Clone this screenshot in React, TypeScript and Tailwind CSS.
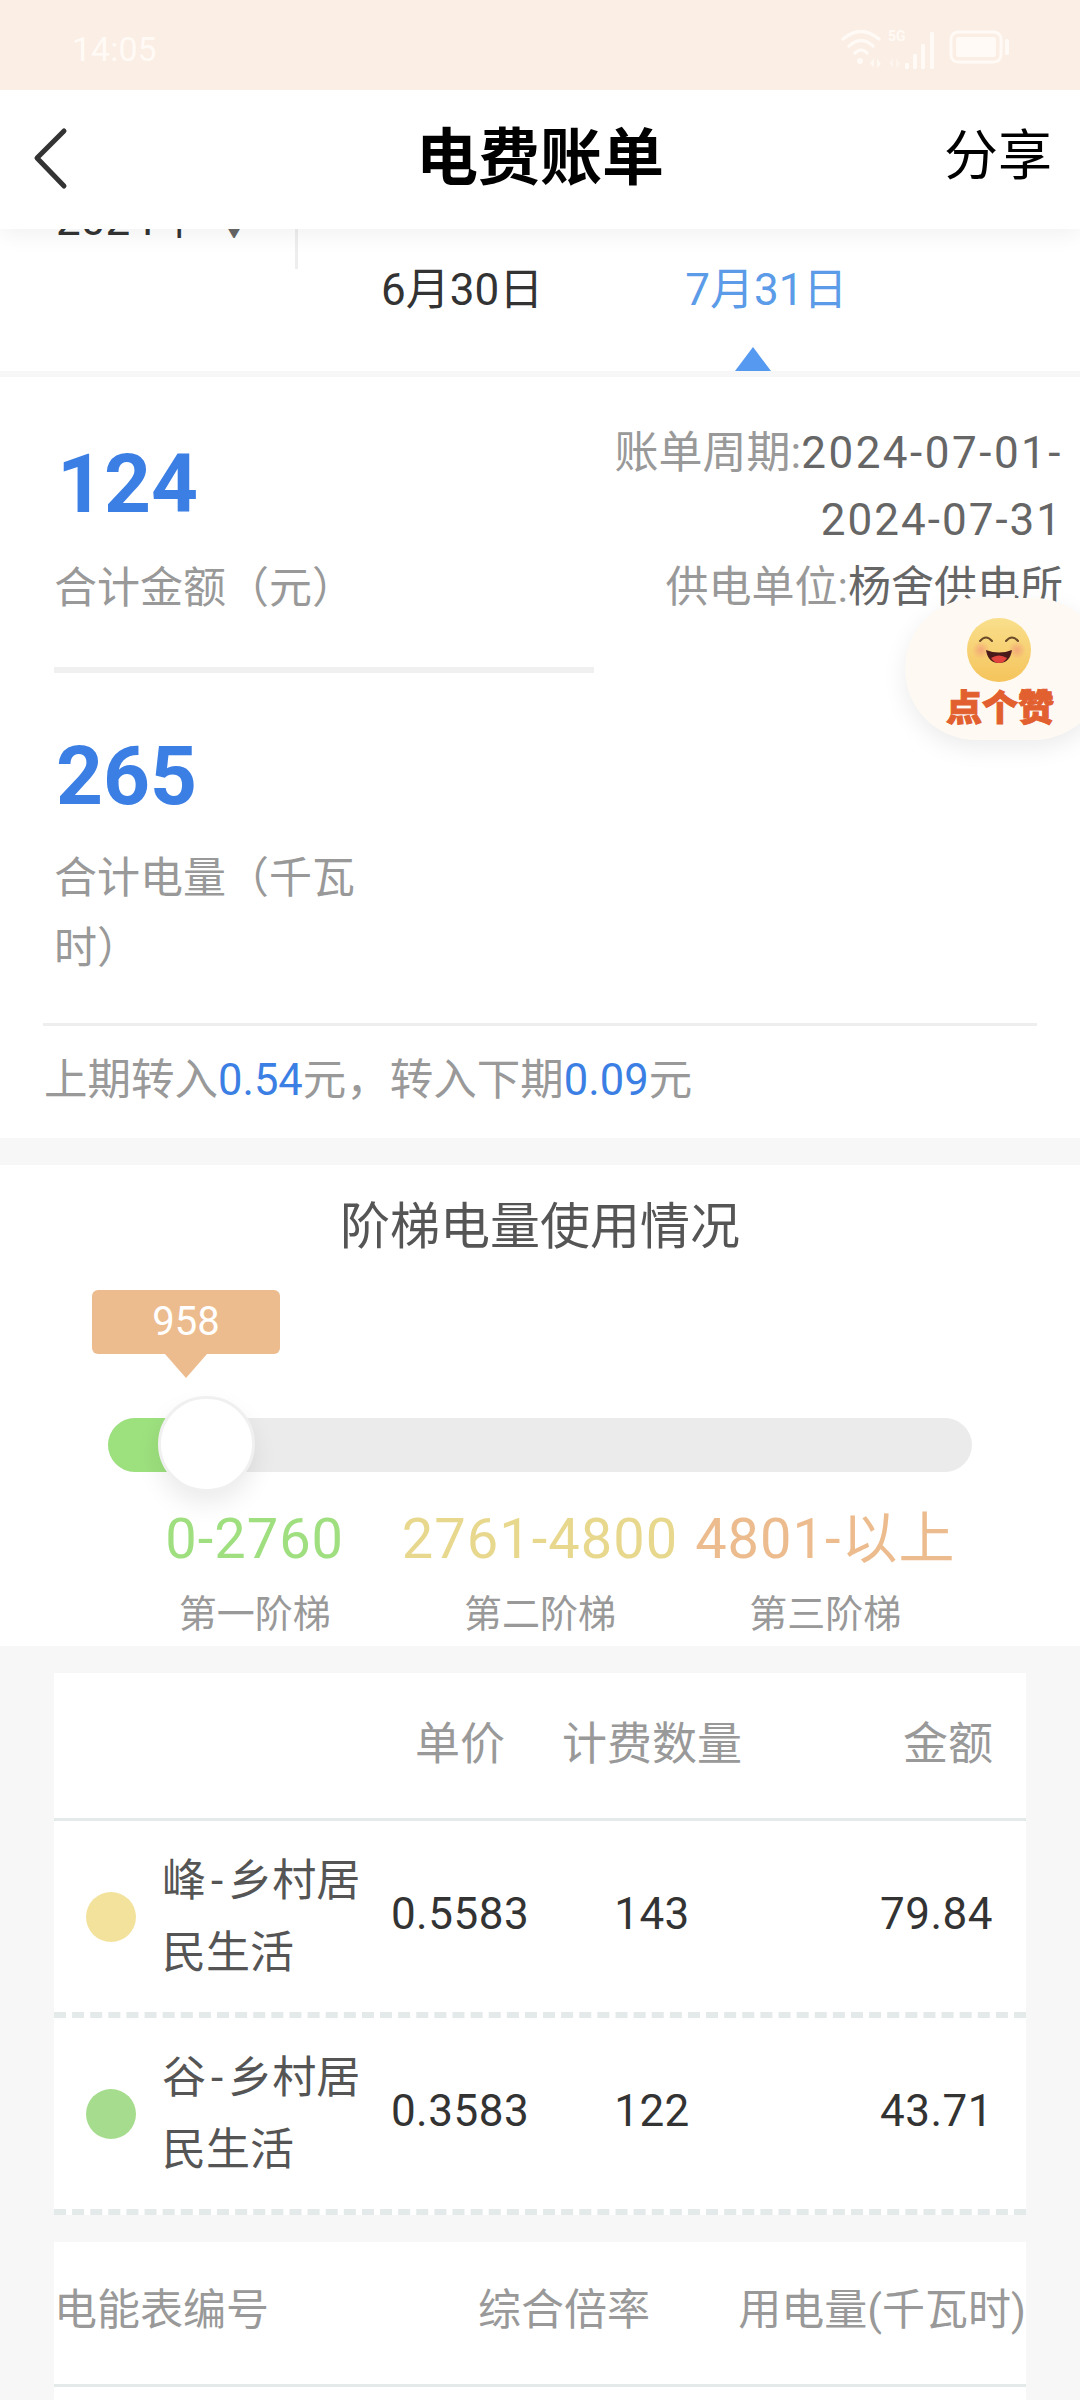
import React from "react";

function StatusIcons() {
  return (
    <svg width="180" height="50" viewBox="0 0 180 50" className="shrink-0">
      <g fill="none" stroke="#fffaf5" strokeWidth="3.4" strokeLinecap="round">
        <path d="M4 14 Q22 -1 40 14" />
        <path d="M10 21 Q22 10 34 21" />
        <path d="M16 28 Q22 22 28 28" />
      </g>
      <circle cx="21" cy="36" r="3" fill="#fffaf5" />
      <path d="M31 38 l4 -5 v10 z M38 33 v10 l4 -4 z" fill="#fffaf5" opacity="0.8" />
      <text x="49" y="16" fontSize="14" fontWeight="700" fill="#fffaf5" fontFamily="Roboto, sans-serif">5G</text>
      <path d="M50 38 l4 -5 v10 z M57 33 v10 l4 -4 z" fill="#fffaf5" opacity="0.55" />
      <g fill="#fffaf5">
        <rect x="66" y="38" width="4" height="6" rx="1" />
        <rect x="74" y="29" width="4" height="15" rx="1" />
        <rect x="82" y="19" width="4" height="25" rx="1" />
        <rect x="91" y="7" width="4" height="37" rx="1" />
      </g>
      <rect x="112" y="7" width="50" height="30" rx="7" fill="none" stroke="#fffaf5" strokeWidth="3" />
      <rect x="117" y="12" width="40" height="20" rx="2" fill="#fffaf5" />
      <rect x="166" y="14" width="4" height="16" rx="1.5" fill="#fffaf5" />
    </svg>
  );
}

function Smile() {
  return (
    <svg width="66" height="66" viewBox="0 0 66 66">
      <defs>
        <linearGradient id="face" x1="0" y1="0" x2="0" y2="1">
          <stop offset="0" stopColor="#f9df8c" />
          <stop offset="1" stopColor="#f5c45c" />
        </linearGradient>
        <radialGradient id="blush">
          <stop offset="0" stopColor="#f29a7a" stopOpacity="0.75" />
          <stop offset="1" stopColor="#f29a7a" stopOpacity="0" />
        </radialGradient>
      </defs>
      <circle cx="33" cy="33" r="32" fill="url(#face)" />
      <circle cx="15" cy="33" r="9" fill="url(#blush)" />
      <circle cx="51" cy="33" r="9" fill="url(#blush)" />
      <path d="M14 24 Q20 17 26 24 M40 24 Q46 17 52 24" fill="none" stroke="#6b4a2a" strokeWidth="2" strokeLinecap="round" />
      <path d="M20 33 Q33 38 46 33 Q44 46 33 46 Q22 46 20 33 Z" fill="#4a1a1a" />
      <path d="M25 41 Q33 36 41 41 Q38 46 33 46 Q28 46 25 41 Z" fill="#e2433c" />
    </svg>
  );
}

function FeeRow({ dot, first, price, qty, amount }: { dot: string; first: string; price: string; qty: string; amount: string }) {
  return (
    <div className="grid grid-cols-[316px_180px_204px_1fr] items-center h-[197px] border-b-[6px] border-dashed border-[#e4e9ea]">
      <div className="flex items-center pl-[32px]">
        <div className={`w-[50px] h-[50px] rounded-full shrink-0 ${dot}`} />
        <div className="ml-[26px] text-[44px] leading-[72px] text-[#555555] whitespace-nowrap">
          <div>{first}<span className="px-[5px]">-</span>乡村居</div>
          <div>民生活</div>
        </div>
      </div>
      <div className="pb-[5px] text-center text-[44px] text-[#333333] tracking-[0.5px]">{price}</div>
      <div className="pb-[5px] text-center text-[44px] text-[#333333] tracking-[0.5px]">{qty}</div>
      <div className="pb-[5px] text-right pr-[33px] text-[44px] text-[#333333] tracking-[0.5px]">{amount}</div>
    </div>
  );
}

export default function App() {
  return (
    <div className="relative w-[1080px] h-[2400px] overflow-hidden bg-[#f7f7f7] font-['Roboto','Noto_Sans_CJK_SC',sans-serif]">
      {/* status bar */}
      <div className="h-[90px] bg-[#fbeee5] flex items-center justify-between pl-[72px] pr-[61px] pt-[8px] relative z-20">
        <span className="text-[34px] text-[#fffaf5]">14:05</span>
        <div className="mt-[2px]"><StatusIcons /></div>
      </div>

      {/* header */}
      <div className="relative z-10 h-[139px] bg-white flex items-center justify-between pl-[30px] pr-[28px] shadow-[0_8px_20px_rgba(0,0,0,0.05)]">
        <svg width="40" height="64" viewBox="0 0 40 64" className="shrink-0 -mt-[4px]">
          <path d="M34 5 L7 32 L34 60" fill="none" stroke="#333333" strokeWidth="5" strokeLinecap="round" strokeLinejoin="round" />
        </svg>
        <div className="absolute left-0 right-0 top-0 h-full flex items-center justify-center pb-[3px] text-[62px] font-bold text-black">电费账单</div>
        <div className="text-[54px] text-black pb-[6px]">分享</div>
      </div>

      {/* date bar */}
      <div className="h-[142px] bg-white flex items-start">
        <div className="w-[298px] h-[40px] border-r-[3px] border-[#eeeeee] overflow-hidden shrink-0">
          <div className="h-[9px] overflow-hidden">
            <div className="-mt-[35px] pl-[56px] flex items-center text-[44px] leading-[52px] text-[#333333]">
              2024年<span className="ml-[22px] text-[26px] translate-y-[8px] text-[#666666]">▼</span>
            </div>
          </div>
        </div>
        <div className="flex pl-[83px] pt-[38px] gap-[142px]">
          <div className="text-[44px] leading-[46px] text-[#333333]">6月30日</div>
          <div className="flex flex-col">
            <div className="text-[44px] leading-[46px] text-[#5b9be8]">7月31日</div>
            <div className="mt-[34px] ml-[50px] w-0 h-0 border-x-[18px] border-x-transparent border-b-[24px] border-b-[#5599f0]" />
          </div>
        </div>
      </div>

      {/* summary */}
      <div className="mt-[6px] bg-white pb-[27px]">
        <div className="flex h-[646px]">
          <div className="w-[594px] pl-[54px] shrink-0">
            <div className="pt-[67px] pl-[3px] text-[82px] leading-[80px] font-bold text-[#3b7fe4]">124</div>
            <div className="mt-[29px] text-[43px] leading-[70px] text-[#999999]">合计金额（元）</div>
            <div className="mt-[44px] h-[6px] bg-[#f0f0f0]" />
            <div className="mt-[63px] pl-[2px] text-[82px] leading-[80px] font-bold text-[#3b7fe4]">265</div>
            <div className="mt-[27px] w-[340px] text-[43px] leading-[70px] text-[#999999]">合计电量（千瓦时）</div>
          </div>
          <div className="flex-1 h-[231px] self-start overflow-hidden pt-[43px] pr-[17px] text-right text-[44px] leading-[67px] text-[#666666]">
            <div className="tracking-[2.5px]"><span className="text-[#999999] tracking-normal">账单周期:</span>2024-07-01-</div>
            <div className="tracking-[2px]">2024-07-31</div>
            <div className="text-[43px]"><span className="text-[#999999]">供电单位:</span>杨舍供电所</div>
          </div>
        </div>
        <div className="mx-[43px] h-[3px] bg-[#eeeeee]" />
        <div className="mt-[25px] ml-[44px] text-[43.5px] leading-[60px] text-[#999999]">
          上期转入<span className="text-[#3b7fe4]">0.54</span>元，转入下期<span className="text-[#3b7fe4]">0.09</span>元
        </div>
      </div>

      {/* like badge */}
      <div className="absolute z-[5] left-[905px] top-[598px] w-[200px] h-[142px] rounded-[71px] bg-[#fef9f3] shadow-[0_8px_24px_rgba(0,0,0,0.08)] flex flex-col pl-[61px] pt-[19px]">
        <Smile />
        <div className="-ml-[20px] mt-[6px] text-[36px] leading-[40px] font-black text-[#e2602f] whitespace-nowrap [-webkit-text-stroke:1px_#e2602f]">点个赞</div>
      </div>

      {/* ladder */}
      <div className="mt-[27px] bg-white h-[481px] pt-[27px]">
        <div className="text-center text-[50px] leading-[70px] text-[#555555]">阶梯电量使用情况</div>
        <div className="relative mt-[28px] ml-[92px] w-[188px] h-[64px] rounded-[6px] bg-[#ecbc8e] flex items-center justify-center text-[40px] text-white">
          958
          <div className="absolute left-[73px] top-[64px] w-0 h-0 border-x-[21px] border-x-transparent border-t-[24px] border-t-[#ecbc8e]" />
        </div>
        <div className="relative mt-[64px] mx-[108px] h-[54px] rounded-full bg-[#ebebeb]">
          <div className="h-full w-[90px] rounded-l-full bg-[#9de07e]" />
          <div className="absolute left-[50px] -top-[22px] w-[97px] h-[96px] rounded-full bg-white border-[3px] border-[#f0f0f0] shadow-[0_12px_24px_rgba(0,0,0,0.08)]" />
        </div>
        <div className="mt-[37px] mx-[112px] grid grid-cols-3 text-center text-[56px] leading-[60px] tracking-[1px]">
          <div className="text-[#9fdf80]">0-2760</div>
          <div className="text-[#e8d88e] whitespace-nowrap">2761-4800</div>
          <div className="text-[#ecbc8e] whitespace-nowrap">4801-以上</div>
        </div>
        <div className="mt-[20px] mx-[112px] grid grid-cols-3 text-center text-[38px] leading-[50px] text-[#999999]">
          <div>第一阶梯</div>
          <div>第二阶梯</div>
          <div>第三阶梯</div>
        </div>
      </div>

      {/* fee table */}
      <div className="mt-[27px] mx-[54px] bg-white">
        <div className="grid grid-cols-[316px_180px_204px_1fr] items-center h-[148px] pb-[2px] border-b-[3px] border-[#e4e9ea] text-[45px] text-[#999999]">
          <div />
          <div className="text-center">单价</div>
          <div className="text-center">计费数量</div>
          <div className="text-right pr-[33px]">金额</div>
        </div>
        <FeeRow dot="bg-[#f3e29c]" first="峰" price="0.5583" qty="143" amount="79.84" />
        <FeeRow dot="bg-[#a6dc8d]" first="谷" price="0.3583" qty="122" amount="43.71" />
      </div>

      {/* meter table */}
      <div className="mt-[27px] mx-[54px] bg-white h-[200px]">
        <div className="grid grid-cols-[400px_220px_1fr] items-center h-[145px] pb-[5px] border-b-[3px] border-[#e4e9ea] text-[43px] text-[#999999]">
          <div>电能表编号</div>
          <div className="text-center">综合倍率</div>
          <div className="text-right whitespace-nowrap">用电量(千瓦时)</div>
        </div>
      </div>
    </div>
  );
}
